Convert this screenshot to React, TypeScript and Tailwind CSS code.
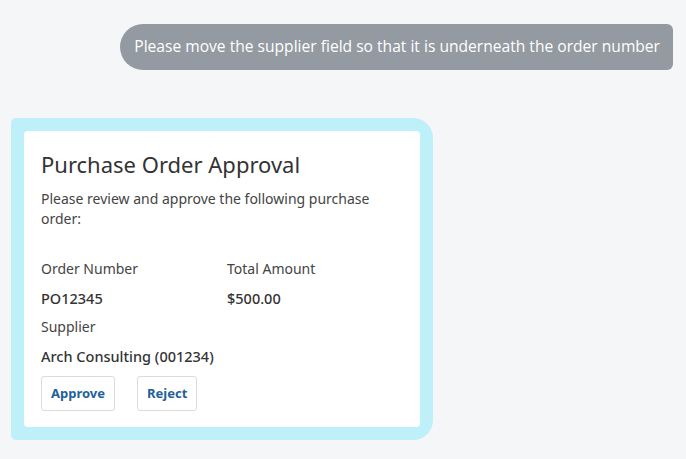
import React from "react";

const Field = ({ label, value }: { label: string; value: string }) => (
  <div className="flex flex-col">
    <span className="text-[14px] leading-[20px] text-[#444]">{label}</span>
    <span className="mt-[9px] text-[14.5px] leading-[20px] font-medium text-[#333]">{value}</span>
  </div>
);

const App = () => {
  return (
    <div className="w-[686px] h-[459px] bg-[#f5f6f8] overflow-hidden font-['Noto_Sans',sans-serif]">
      {/* User message */}
      <div className="flex justify-end pt-[24px] pr-[13px]">
        <div className="h-[46px] flex items-center pl-[14px] pr-[13px] bg-[#939aa1] rounded-l-[23px] rounded-r-[6px] text-white text-[15.6px] font-['Open_Sans',sans-serif] whitespace-nowrap">
          Please move the supplier field so that it is underneath the order number
        </div>
      </div>

      {/* Approval card */}
      <div className="mt-[48px] ml-[11px] w-[422px] p-[13px] bg-[#bdf0f8] rounded-tl-[5px] rounded-bl-[5px] rounded-tr-[20px] rounded-br-[20px]">
        <div className="bg-white rounded-[4px] px-[17px] pt-[18px] pb-[16px]">
          <h1 className="text-[22px] leading-[30px] text-[#333]">Purchase Order Approval</h1>
          <p className="mt-[10px] text-[14px] leading-[20px] text-[#444] pr-[10px]">
            Please review and approve the following purchase order:
          </p>
          <div className="mt-[30px] grid grid-cols-2 gap-y-[9px] w-[372px]">
            <Field label="Order Number" value="PO12345" />
            <Field label="Total Amount" value="$500.00" />
            <Field label="Supplier" value="Arch Consulting (001234)" />
          </div>
          <div className="mt-[10px] flex gap-[22px]">
            <button className="h-[35px] px-[9px] border border-[#dcdcdc] rounded-[3px] text-[13px] font-bold text-[#1f5f9a]">
              Approve
            </button>
            <button className="h-[35px] px-[9px] border border-[#dcdcdc] rounded-[3px] text-[13px] font-bold text-[#1f5f9a]">
              Reject
            </button>
          </div>
        </div>
      </div>
    </div>
  );
};

export default App;
